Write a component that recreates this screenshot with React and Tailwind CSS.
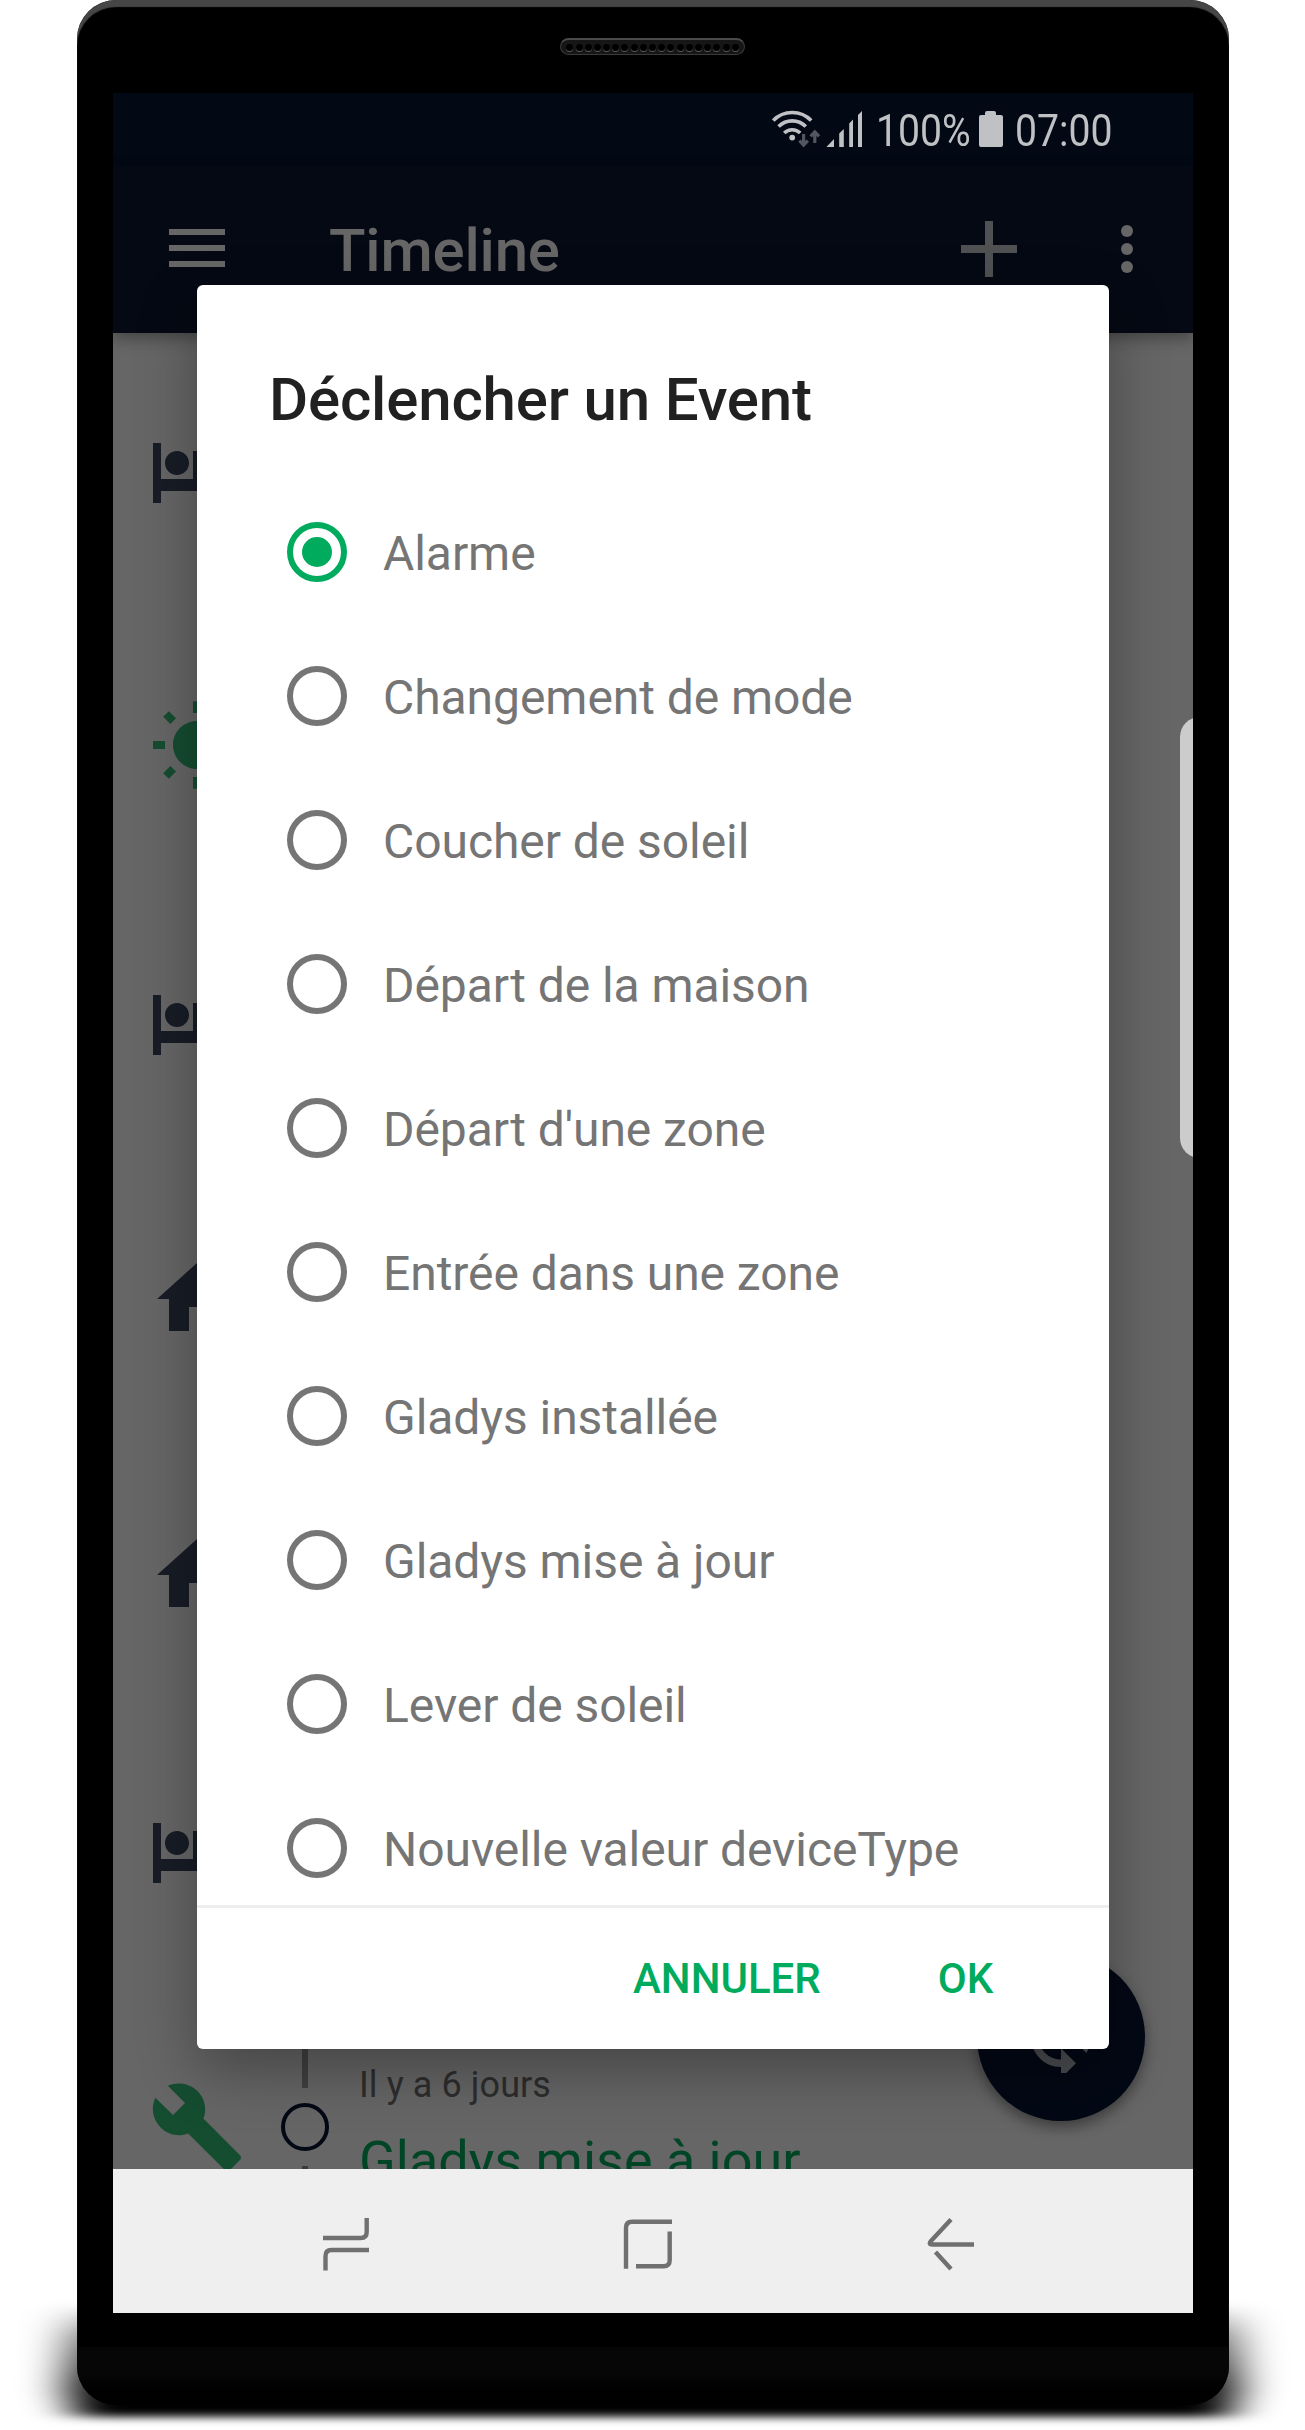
import React from 'react';

const BED =
  'M7 13c1.66 0 3-1.34 3-3S8.66 7 7 7s-3 1.34-3 3 1.34 3 3 3zm12-6h-8v7H3V5H1v15h2v-3h18v3h2v-9c0-2.21-1.79-4-4-4z';
const SUN =
  'M6.76 4.84l-1.8-1.79-1.41 1.41 1.79 1.79 1.42-1.41zM4 10.5H1v2h3v-2zm9-9.95h-2V3.5h2V.55zm7.45 3.91l-1.41-1.41-1.79 1.79 1.41 1.41 1.79-1.79zm-3.21 13.7l1.79 1.8 1.41-1.41-1.8-1.79-1.4 1.4zM20 10.5v2h3v-2h-3zm-8-5c-3.31 0-6 2.69-6 6s2.69 6 6 6 6-2.69 6-6-2.69-6-6-6zm-1 16.95h2V19.5h-2v2.95zm-7.45-3.91l1.41 1.41 1.79-1.8-1.41-1.41-1.79 1.8z';
const HOME = 'M10 20v-6h4v6h5v-8h3L12 3 2 12h3v8z';
const WRENCH =
  'M22.7 19l-9.1-9.1c.9-2.3.4-5-1.5-6.9-2-2-5-2.4-7.4-1.3L9 6 6 9 1.6 4.7C.4 7.1.9 10.1 2.9 12.1c1.9 1.9 4.6 2.4 6.9 1.5l9.1 9.1c.4.4 1 .4 1.4 0l2.3-2.3c.5-.4.5-1.1.1-1.4z';
const SYNC =
  'M12 4V1L8 5l4 4V6c3.31 0 6 2.69 6 6 0 1.01-.25 1.97-.7 2.8l1.46 1.46C19.54 15.03 20 13.57 20 12c0-4.42-3.58-8-8-8zm0 14c-3.31 0-6-2.69-6-6 0-1.01.25-1.97.7-2.8L5.24 7.74C4.46 8.97 4 10.43 4 12c0 4.42 3.58 8 8 8v3l4-4-4-4v3z';

const NAVY = 'text-[#181c26]';
const GREEN = 'text-[#154d31]';

const timeline = [
  { path: BED, color: NAVY },
  { path: SUN, color: GREEN },
  { path: BED, color: NAVY },
  { path: HOME, color: NAVY },
  { path: HOME, color: NAVY },
  { path: BED, color: NAVY },
  { path: WRENCH, color: GREEN, time: 'Il y a 6 jours', title: 'Gladys mise à jour' },
];

const events = [
  'Alarme',
  'Changement de mode',
  'Coucher de soleil',
  'Départ de la maison',
  "Départ d'une zone",
  'Entrée dans une zone',
  'Gladys installée',
  'Gladys mise à jour',
  'Lever de soleil',
  'Nouvelle valeur deviceType',
];

function Speaker() {
  return (
    <div className="absolute left-[483px] top-[38px] flex h-[17px] w-[185px] items-center justify-center gap-[2.2px] rounded-full border border-[#3a3a3a] border-t-2 border-t-[#4a4a4a] bg-[#161616]">
      {Array.from({ length: 19 }, (_, i) => (
        <span key={i} className="size-[7px] rounded-full bg-black shadow-[0_1px_0_#5a5a5a]" />
      ))}
    </div>
  );
}

function StatusBar() {
  return (
    <div className="flex h-[72px] bg-[#020814] pl-[658px] text-[#bfc1c4]">
      <svg className="mt-[17px] h-[38px] w-[94px] shrink-0" viewBox="771 110 94 38">
        <g fill="none" stroke="currentColor" strokeWidth="3.6">
          <path d="M773.2 120.5a26.5 26.5 0 0 1 38 0" />
          <path d="M778.6 126.6a19 19 0 0 1 27.2 0" />
          <path d="M784.2 133a11.4 11.4 0 0 1 16 0" />
        </g>
        <circle cx="792.2" cy="137.6" r="2.9" fill="currentColor" />
        <g fill="none" stroke="#52565f" strokeWidth="3.2">
          <path d="M803.6 134v11M799.4 140.6l4.2 4.6 4.2-4.6M814.8 143v-11M810.6 136.4l4.2-4.6 4.2 4.6" />
        </g>
        <path
          fill="currentColor"
          d="M826.4 147l7.6-8v8zM839.2 147v-13.500l4.600-4.500v18zM849.200 147v-23.500l3.800-4v27.500zM858 147v-32l4-4v36z"
        />
      </svg>
      <span className="ml-[11px] mt-[11px] block w-[96px] shrink-0 origin-left scale-x-[0.87] whitespace-nowrap text-[45px] leading-[54px]">
        100%
      </span>
      <svg className="ml-[7px] mt-[18px] h-[36px] w-[24px] shrink-0" viewBox="0 0 24 36" fill="currentColor">
        <path d="M6 4V2q0-2 2-2h7q2 0 2 2v2h5q2 0 2 2v28q0 2-2 2H2q-2 0-2-2V6q0-2 2-2z" />
      </svg>
      <span className="ml-[12px] mt-[11px] block origin-left scale-x-[0.87] whitespace-nowrap text-[45px] leading-[54px]">
        07:00
      </span>
    </div>
  );
}

function Toolbar() {
  return (
    <div className="relative flex h-[168px] items-start bg-[#050913] pl-[56px] text-[#666] shadow-[0_6px_14px_rgba(0,0,0,0.32)]">
      <div className="mt-[64px] flex w-[56px] flex-col gap-[10px]">
        <span className="h-[6px] bg-[#666]" />
        <span className="h-[6px] bg-[#666]" />
        <span className="h-[6px] bg-[#666]" />
      </div>
      <span className="ml-[104px] mt-[51px] w-[632px] shrink-0 text-[60px] font-medium leading-[70px] tracking-[-0.2px]">
        Timeline
      </span>
      <svg className="mt-[56px] size-[56px] shrink-0" viewBox="0 0 56 56" fill="#505153">
        <path d="M24 0h8v24h24v8H32v24h-8V32H0v-8h24z" />
      </svg>
      <div className="ml-[104px] mt-[60px] flex flex-col gap-[6px]">
        <span className="size-[12px] rounded-full bg-[#666]" />
        <span className="size-[12px] rounded-full bg-[#666]" />
        <span className="size-[12px] rounded-full bg-[#666]" />
      </div>
    </div>
  );
}

function TimelineItem({ item }) {
  return (
    <div className="flex h-[276px] pl-[36px]">
      <svg className={`mt-[90px] size-[96px] shrink-0 ${item.color}`} viewBox="0 0 24 24" fill="currentColor">
        <path d={item.path} />
      </svg>
      <div className="ml-[36px] flex w-[48px] flex-col items-center">
        <span className="h-[99px] w-[6px] bg-[#414141]" />
        <span className="my-[15px] size-[48px] shrink-0 rounded-full border-[4px] border-[#030815]" />
        <span className="h-[99px] w-[6px] bg-[#3a3a3a]" />
      </div>
      {item.title && (
        <div className="ml-[30px] whitespace-nowrap pt-[75px]">
          <div className="text-[36px] leading-[42px] tracking-[0.08px] text-[#2d2d2d]">{item.time}</div>
          <div className="mt-[23px] text-[54px] leading-[64px] text-[#004525]">{item.title}</div>
        </div>
      )}
    </div>
  );
}

function Radio({ checked }) {
  return (
    <span
      className={`flex size-[60px] items-center justify-center rounded-full border-[6px] ${
        checked ? 'border-[#00ab5d]' : 'border-[#757575]'
      }`}
    >
      {checked && <span className="size-[30px] rounded-full bg-[#00ab5d]" />}
    </span>
  );
}

function Dialog() {
  return (
    <div className="absolute left-[84px] top-[192px] flex h-[1764px] w-[912px] flex-col overflow-hidden rounded-[6px] bg-white">
      <h2 className="h-[195px] pl-[72px] pt-[80px] text-[60px] font-medium leading-[70px] tracking-[-0.17px] text-[#212121]">
        Déclencher un Event
      </h2>
      <div className="h-[1425px] overflow-hidden">
        {events.map((label, i) => (
          <div key={label} className="flex h-[144px] items-center pl-[90px]">
            <Radio checked={i === 0} />
            <span className="ml-[36px] mt-[4px] whitespace-nowrap text-[48px] leading-[56px] tracking-[-0.06px] text-[#757575]">
              {label}
            </span>
          </div>
        ))}
      </div>
      <div className="flex flex-1 border-t-[3px] border-[#eee] text-[42px] font-medium leading-[50px] text-[#00ab5d]">
        <span className="ml-[436px] mt-[46px]">ANNULER</span>
        <span className="ml-[117px] mt-[46px]">OK</span>
      </div>
    </div>
  );
}

function NavBar() {
  return (
    <div className="flex h-[144px] items-start bg-[#efefef] pl-[209px] pt-[48px]">
      <svg className="h-[54px] w-[48px]" viewBox="322 2217 48 54" fill="none" stroke="#707070" strokeWidth="4.4">
        <path d="M366.7 2218v14q0 6-6 6H323M369 2250h-37.5q-6 0-6 6v14.5" />
      </svg>
      <svg className="ml-[252px] h-[54px] w-[51px]" viewBox="622 2217 51 54" fill="none" stroke="#707070" strokeWidth="4.4">
        <path d="M672 2221.8h-40q-6 0-6 6v41M636 2266.2h27.7q6 0 6-6v-28.7" />
      </svg>
      <svg className="ml-[254px] h-[54px] w-[48px]" viewBox="927 2217 48 54" fill="none" stroke="#707070" strokeWidth="4.4">
        <path d="M951 2219.5l-20 21.5q-3 3.500 1.500 3.500H974M935.500 2252l15.500 17" />
      </svg>
    </div>
  );
}

function GroundShadow() {
  return (
    <svg className="absolute left-0 top-[2230px] h-[200px] w-[1305px]" viewBox="0 2230 1305 200">
      <defs>
        <linearGradient id="ground" gradientUnits="userSpaceOnUse" x1="0" y1="2304" x2="0" y2="2416">
          <stop offset="0" stopColor="#000" stopOpacity="0" />
          <stop offset="0.3" stopColor="#000" stopOpacity="0.5" />
          <stop offset="0.7" stopColor="#000" stopOpacity="0.9" />
          <stop offset="0.9" stopColor="#000" />
        </linearGradient>
        <filter id="soft" filterUnits="userSpaceOnUse" x="-60" y="2230" width="1425" height="260">
          <feGaussianBlur stdDeviation="22 4" />
        </filter>
      </defs>
      <path d="M66 2300H1239V2390L1229 2417H76L66 2390z" fill="url(#ground)" filter="url(#soft)" />
    </svg>
  );
}

export default function App() {
  return (
    <div className="relative h-[2430px] w-[1305px] overflow-hidden bg-white font-['Roboto',sans-serif]">
      <GroundShadow />
      <div className="relative ml-[77px] h-[2405px] w-[1152px] overflow-hidden rounded-[39px] bg-black px-[36px] pt-[93px] shadow-[inset_0_7px_1px_#464646]">
        <Speaker />
        <div className="relative h-[2220px] w-[1080px] overflow-hidden bg-[#666]">
          <div className="relative h-[2076px] overflow-hidden">
            <div className="relative z-10">
              <StatusBar />
              <Toolbar />
            </div>
            <div>
              {timeline.map((item, i) => (
                <TimelineItem key={i} item={item} />
              ))}
            </div>
            <div className="absolute left-[864px] top-[1860px] flex size-[168px] items-center justify-center rounded-full bg-[#030815] shadow-[0_6px_14px_rgba(0,0,0,0.4)]">
              <svg className="size-[72px]" viewBox="2.4 2.4 19.2 19.2" fill="#4c4d51">
                <path d={SYNC} />
              </svg>
            </div>
            <div className="absolute left-[84px] top-[192px] z-20 h-[1764px] w-[912px] rounded-[6px] shadow-[0_22px_60px_rgba(0,0,0,0.32)]" />
          </div>
          <NavBar />
          <div className="absolute inset-0 z-30">
            <Dialog />
            <div className="absolute left-[1067px] top-[624px] h-[441px] w-[40px] rounded-[20px] bg-[#ccc]" />
          </div>
        </div>
        <div className="-mx-[36px] mt-[34px] h-[58px] bg-linear-to-b from-[#060606] via-[#060606] to-black" />
      </div>
    </div>
  );
}
